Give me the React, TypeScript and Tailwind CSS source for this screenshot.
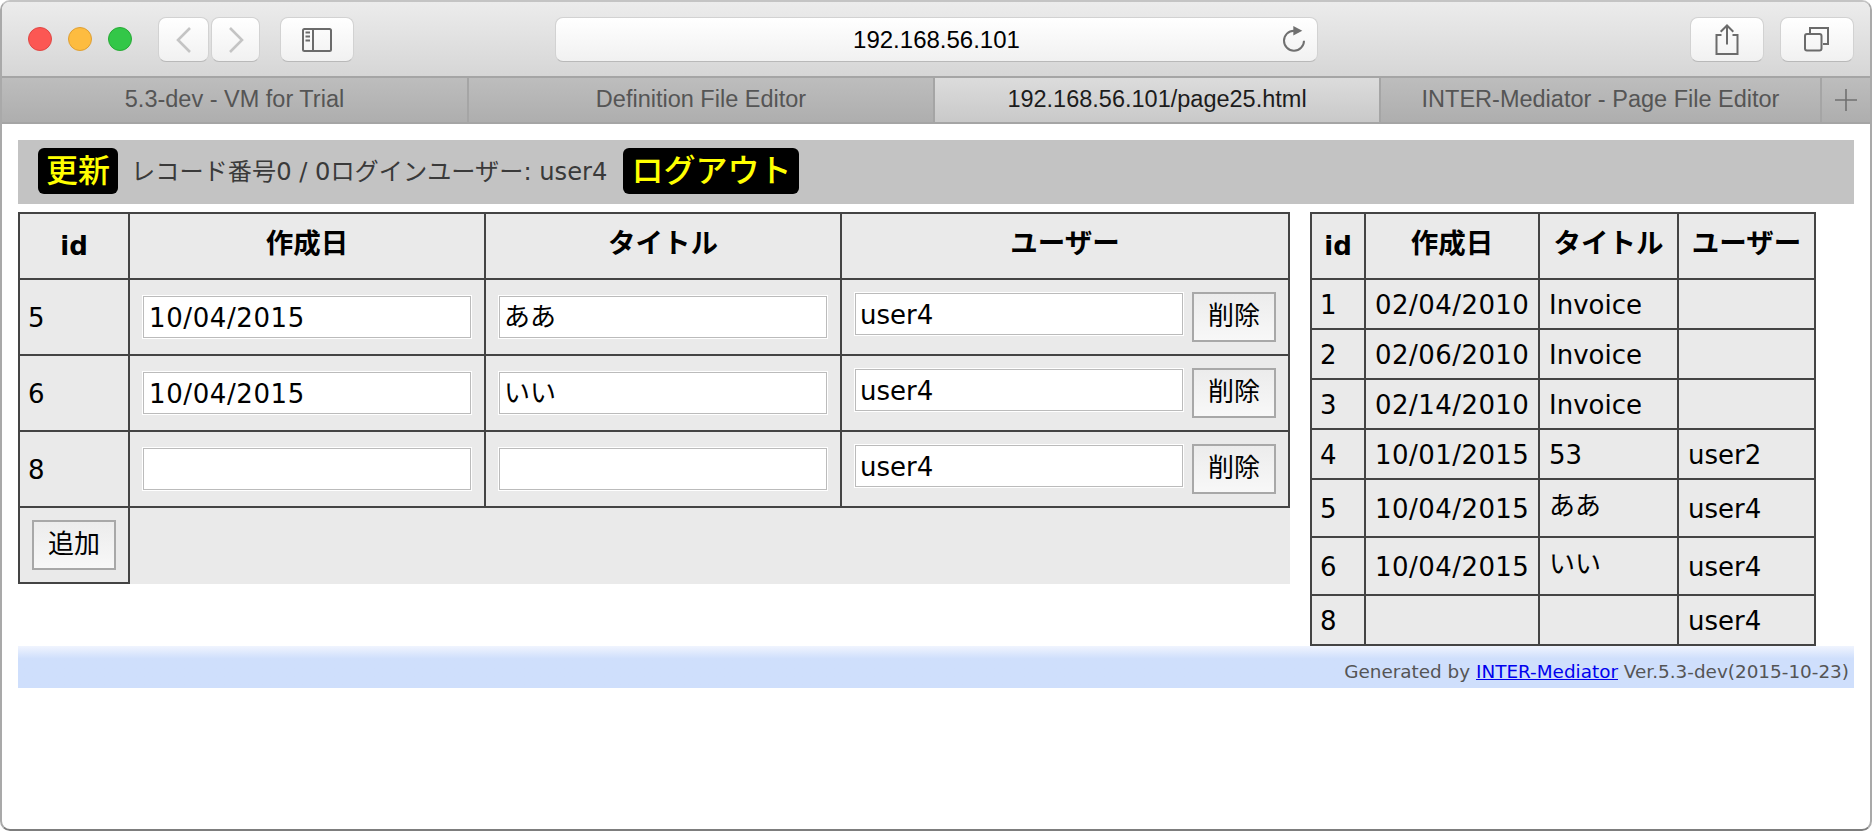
const ui = { fontFamily: '"Liberation Sans", "Noto Sans CJK JP", sans-serif' };
const body = { fontFamily: '"DejaVu Sans", "Noto Sans CJK JP", sans-serif' };

function TrafficLight({ color, edge }: { color: string; edge: string }) {
  return <span className={`h-6 w-6 rounded-full border ${color} ${edge}`} />;
}

function ToolButton({ className, children }: { className: string; children?: React.ReactNode }) {
  return (
    <div className={`flex h-[45px] items-center justify-center rounded-lg border border-[#d2d2d2] border-b-[#b9b9b9] bg-gradient-to-b from-white to-[#f1f1f1] ${className}`}>
      {children}
    </div>
  );
}

function Tab({ title, active, className }: { title: string; active?: boolean; className: string }) {
  return (
    <div
      className={`flex h-full items-center justify-center border-r-2 border-[#a5a5a5] pb-[1px] text-[23.5px] ${className} ${
        active ? 'bg-gradient-to-b from-[#dcdcdc] to-[#c9c9c9] text-[#1c1c1c]' : 'bg-gradient-to-b from-[#bdbdbd] to-[#aeaeae] text-[#555555]'
      }`}
    >
      {title}
    </div>
  );
}

function TextField({ value, className }: { value: string; className: string }) {
  return (
    <input
      readOnly
      value={value}
      className={`block h-[42px] w-[328px] border border-[#bbbbbb] bg-white px-[5px] text-[26px] text-black outline outline-1 outline-white ${className}`}
      style={body}
    />
  );
}

function ActionButton({ label }: { label: string }) {
  return (
    <button className="flex h-[50px] w-[84px] items-center justify-center border-2 border-[#a8a8a8] bg-gradient-to-b from-[#ececec] to-[#f8f8f8] pb-[1px] text-[26px] text-black">
      {label}
    </button>
  );
}

const th = 'border-2 border-[#444444] pb-[4px] text-center align-middle text-[27.5px] font-bold text-black';
const thId = 'border-2 border-[#444444] text-center align-middle text-[26px] font-bold text-black';
const td = 'border-2 border-[#444444] text-[26px] text-black';

function EditRow({ id, date, title }: { id: string; date: string; title: string }) {
  return (
    <tr className="h-[76px]">
      <td className={`${td} pt-[2px] pl-[8px]`}>{id}</td>
      <td className={`${td} px-[13px]`}>
        <TextField value={date} className="mb-[1px] pt-[3px] tracking-[0.6px]" />
      </td>
      <td className={`${td} px-[13px]`}>
        <TextField value={title} className="mb-[1px] pb-[5px] pl-[4px]" />
      </td>
      <td className={`${td} pl-[13px]`}>
        <div className="flex items-start gap-[9px]">
          <TextField value="user4" className="mt-[1px] pt-[1px] pl-[4px]" />
          <ActionButton label="削除" />
        </div>
      </td>
    </tr>
  );
}

const listRows = [
  { id: '1', date: '02/04/2010', title: 'Invoice', user: '', h: 'h-[50px]' },
  { id: '2', date: '02/06/2010', title: 'Invoice', user: '', h: 'h-[50px]' },
  { id: '3', date: '02/14/2010', title: 'Invoice', user: '', h: 'h-[50px]' },
  { id: '4', date: '10/01/2015', title: '53', user: 'user2', h: 'h-[50px]' },
  { id: '5', date: '10/04/2015', title: 'ああ', user: 'user4', h: 'h-[58px]' },
  { id: '6', date: '10/04/2015', title: 'いい', user: 'user4', h: 'h-[58px]' },
  { id: '8', date: '', title: '', user: 'user4', h: 'h-[50px]' },
];

export default function App() {
  return (
    <div className="h-[832px] w-[1872px] overflow-hidden bg-white" style={ui}>
      <div className="flex h-[831px] flex-col overflow-hidden rounded-t-[10px] rounded-b-[10px] border-2 border-[#a9a9a9] border-t-[#c4c4c4] border-b-[#7d7d7d] bg-white">
        <div className="flex h-[74px] shrink-0 items-start bg-gradient-to-b from-[#ececec] to-[#d6d6d6] pt-[15px]">
          <div className="mt-[10px] ml-[26px] flex gap-4">
            <TrafficLight color="bg-[#fc5753]" edge="border-[#df4744]" />
            <TrafficLight color="bg-[#fdbc40]" edge="border-[#de9f34]" />
            <TrafficLight color="bg-[#33c748]" edge="border-[#27aa35]" />
          </div>
          <div className="ml-[26px] flex gap-[2px]">
            <ToolButton className="w-[51px]">
              <svg width="18" height="28" viewBox="0 0 18 28" fill="none" stroke="#c4c4c4" strokeWidth="2.6">
                <path d="M15 2 L3 14 L15 26" />
              </svg>
            </ToolButton>
            <ToolButton className="w-[49px]">
              <svg width="18" height="28" viewBox="0 0 18 28" fill="none" stroke="#c4c4c4" strokeWidth="2.6">
                <path d="M3 2 L15 14 L3 26" />
              </svg>
            </ToolButton>
          </div>
          <ToolButton className="ml-[20px] w-[74px]">
            <svg width="30" height="24" viewBox="0 0 30 24" fill="none" stroke="#6b6b6b" strokeWidth="2">
              <rect x="1" y="1" width="28" height="22" rx="1.5" />
              <path d="M11 1 V23" />
              <path d="M3.5 4.5 H8 M3.5 8.5 H8 M3.5 12.5 H8" />
            </svg>
          </ToolButton>
          <ToolButton className="relative ml-[201px] w-[763px] text-[24px] text-black">
            192.168.56.101
            <svg className="absolute right-[11px] top-[7px]" width="24" height="28" viewBox="0 0 24 28" fill="none" stroke="#707070" strokeWidth="2">
              <path d="M12 5.7 A10 10 0 1 0 22 15.7" />
              <path d="M11.3 1 L20.3 5.7 L11.3 10.4 Z" fill="#707070" stroke="none" />
            </svg>
          </ToolButton>
          <ToolButton className="ml-[372px] w-[74px]">
            <svg width="24" height="32" viewBox="0 0 24 32" fill="none" stroke="#6b6b6b" strokeWidth="2">
              <path d="M6.5 11 H1.5 V30 H22.5 V11 H17.5" />
              <path d="M12 1.5 V20.5 M5.7 7.8 L12 1.5 L18.3 7.8" />
            </svg>
          </ToolButton>
          <ToolButton className="ml-[16px] w-[74px]">
            <svg width="26" height="25" viewBox="0 0 26 25" fill="none" stroke="#6b6b6b" strokeWidth="2">
              <rect x="1" y="7" width="16.5" height="16.5" rx="2" />
              <path d="M6 7 V1 H24 V17 H19" />
            </svg>
          </ToolButton>
        </div>

        <div className="flex h-12 shrink-0 border-y-2 border-[#a5a5a5]">
          <Tab title="5.3-dev - VM for Trial" className="w-[467px]" />
          <Tab title="Definition File Editor" className="w-[466px]" />
          <Tab title="192.168.56.101/page25.html" active className="w-[446px]" />
          <Tab title="INTER-Mediator - Page File Editor" className="w-[441px]" />
          <div className="flex h-full flex-1 items-center justify-center bg-gradient-to-b from-[#bdbdbd] to-[#aeaeae]">
            <svg width="24" height="24" viewBox="0 0 24 24" stroke="#707070" strokeWidth="1.6">
              <path d="M12 1 V23 M1 12 H23" />
            </svg>
          </div>
        </div>

        <div className="flex-1 px-4 pt-[16px]">
          <div className="flex h-16 items-center gap-[13px] bg-[#c3c3c3] pb-[2px] pl-[20px] text-[24.2px] text-[#3a3a3a]" style={body}>
            <span className="flex h-[46px] w-[80px] items-center justify-center rounded-md bg-black text-[32px] font-medium text-[#ffff00]">更新</span>
            <span className="pt-[3px]">レコード番号0 / 0ログインユーザー: user4</span>
            <span className="ml-[3px] flex h-[46px] w-[176px] items-center justify-center rounded-md bg-black text-[32px] font-medium text-[#ffff00]">ログアウト</span>
          </div>

          <div className="mt-2 flex items-start gap-5" style={body}>
            <table className="w-[1272px] table-fixed border-collapse bg-[#eaeaea]">
              <colgroup>
                <col className="w-[110px]" />
                <col className="w-[356px]" />
                <col className="w-[356px]" />
                <col className="w-[448px]" />
              </colgroup>
              <thead>
                <tr className="h-[66px]">
                  <th className={thId}>id</th>
                  <th className={th}>作成日</th>
                  <th className={th}>タイトル</th>
                  <th className={th}>ユーザー</th>
                </tr>
              </thead>
              <tbody>
                <EditRow id="5" date="10/04/2015" title="ああ" />
                <EditRow id="6" date="10/04/2015" title="いい" />
                <EditRow id="8" date="" title="" />
                <tr className="h-[76px]">
                  <td className={`${td} pl-[12px]`}>
                    <ActionButton label="追加" />
                  </td>
                  <td colSpan={3} />
                </tr>
              </tbody>
            </table>

            <table className="w-[504px] table-fixed border-collapse bg-[#eaeaea]">
              <colgroup>
                <col className="w-[54px]" />
                <col className="w-[174px]" />
                <col className="w-[139px]" />
                <col className="w-[137px]" />
              </colgroup>
              <thead>
                <tr className="h-[66px]">
                  <th className={thId}>id</th>
                  <th className={th}>作成日</th>
                  <th className={th}>タイトル</th>
                  <th className={th}>ユーザー</th>
                </tr>
              </thead>
              <tbody>
                {listRows.map((r) => (
                  <tr key={r.id} className={r.h}>
                    <td className={`${td} pt-[2px] pl-[8px]`}>{r.id}</td>
                    <td className={`${td} pt-[2px] pl-[9px] tracking-[0.45px]`}>{r.date}</td>
                    <td className={`${td} pl-[9px] ${r.title === 'ああ' || r.title === 'いい' ? 'pb-[3px]' : 'pt-[2px]'}`}>{r.title}</td>
                    <td className={`${td} pt-[2px] pl-[9px]`}>{r.user}</td>
                  </tr>
                ))}
              </tbody>
            </table>
          </div>

          <div className="flex h-[42px] items-end justify-end bg-gradient-to-b from-[#f0f4fe] from-0% to-[#cfdffc] to-30% pb-[2px] pr-[5px] text-[18.4px] text-[#555555]" style={{ fontFamily: '"DejaVu Sans", sans-serif' }}>
            <span>
              Generated by <a className="text-[#0000ee] underline">INTER-Mediator</a> Ver.5.3-dev(2015-10-23)
            </span>
          </div>
        </div>
      </div>
    </div>
  );
}
